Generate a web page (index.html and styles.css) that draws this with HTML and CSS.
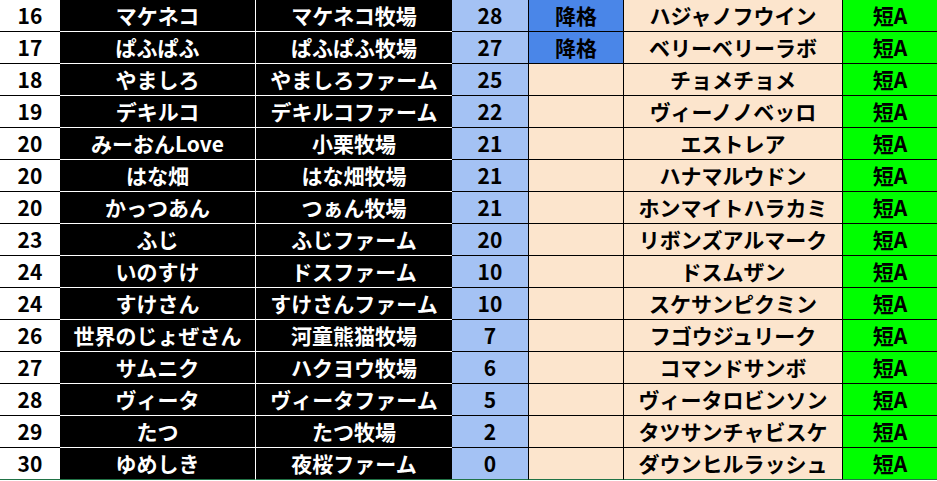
FILE: index.html
```html
<!DOCTYPE html>
<html lang="ja">
<head>
<meta charset="utf-8">
<link rel="stylesheet" href="styles.css">
</head>
<body>
<div class="sheet">
  <div class="row"><div class="c rank">16</div><div class="c name">マケネコ</div><div class="c farm">マケネコ牧場</div><div class="c pts">28</div><div class="c st down">降格</div><div class="c horse">ハジャノフウイン</div><div class="c grade">短A</div></div>
  <div class="row"><div class="c rank">17</div><div class="c name">ぱふぱふ</div><div class="c farm">ぱふぱふ牧場</div><div class="c pts">27</div><div class="c st down">降格</div><div class="c horse">ベリーベリーラボ</div><div class="c grade">短A</div></div>
  <div class="row"><div class="c rank">18</div><div class="c name">やましろ</div><div class="c farm">やましろファーム</div><div class="c pts">25</div><div class="c st"></div><div class="c horse">チョメチョメ</div><div class="c grade">短A</div></div>
  <div class="row"><div class="c rank">19</div><div class="c name">デキルコ</div><div class="c farm">デキルコファーム</div><div class="c pts">22</div><div class="c st"></div><div class="c horse">ヴィーノノベッロ</div><div class="c grade">短A</div></div>
  <div class="row"><div class="c rank">20</div><div class="c name">みーおんLove</div><div class="c farm">小栗牧場</div><div class="c pts">21</div><div class="c st"></div><div class="c horse">エストレア</div><div class="c grade">短A</div></div>
  <div class="row"><div class="c rank">20</div><div class="c name">はな畑</div><div class="c farm">はな畑牧場</div><div class="c pts">21</div><div class="c st"></div><div class="c horse">ハナマルウドン</div><div class="c grade">短A</div></div>
  <div class="row"><div class="c rank">20</div><div class="c name">かっつあん</div><div class="c farm">つぁん牧場</div><div class="c pts">21</div><div class="c st"></div><div class="c horse">ホンマイトハラカミ</div><div class="c grade">短A</div></div>
  <div class="row"><div class="c rank">23</div><div class="c name">ふじ</div><div class="c farm">ふじファーム</div><div class="c pts">20</div><div class="c st"></div><div class="c horse">リボンズアルマーク</div><div class="c grade">短A</div></div>
  <div class="row"><div class="c rank">24</div><div class="c name">いのすけ</div><div class="c farm">ドスファーム</div><div class="c pts">10</div><div class="c st"></div><div class="c horse">ドスムザン</div><div class="c grade">短A</div></div>
  <div class="row"><div class="c rank">24</div><div class="c name">すけさん</div><div class="c farm">すけさんファーム</div><div class="c pts">10</div><div class="c st"></div><div class="c horse">スケサンピクミン</div><div class="c grade">短A</div></div>
  <div class="row"><div class="c rank">26</div><div class="c name">世界のじょぜさん</div><div class="c farm">河童熊猫牧場</div><div class="c pts">7</div><div class="c st"></div><div class="c horse">フゴウジュリーク</div><div class="c grade">短A</div></div>
  <div class="row"><div class="c rank">27</div><div class="c name">サムニク</div><div class="c farm">ハクヨウ牧場</div><div class="c pts">6</div><div class="c st"></div><div class="c horse">コマンドサンボ</div><div class="c grade">短A</div></div>
  <div class="row"><div class="c rank">28</div><div class="c name">ヴィータ</div><div class="c farm">ヴィータファーム</div><div class="c pts">5</div><div class="c st"></div><div class="c horse">ヴィータロビンソン</div><div class="c grade">短A</div></div>
  <div class="row"><div class="c rank">29</div><div class="c name">たつ</div><div class="c farm">たつ牧場</div><div class="c pts">2</div><div class="c st"></div><div class="c horse">タツサンチャビスケ</div><div class="c grade">短A</div></div>
  <div class="row last"><div class="c rank">30</div><div class="c name">ゆめしき</div><div class="c farm">夜桜ファーム</div><div class="c pts">0</div><div class="c st"></div><div class="c horse">ダウンヒルラッシュ</div><div class="c grade">短A</div></div>
</div>
</body>
</html>
```

FILE: styles.css
```css
html, body {
  margin: 0;
  padding: 0;
  background: #ffffff;
}
.sheet {
  width: 937px;
  font-family: "Noto Sans CJK JP", "Noto Sans", sans-serif;
  font-weight: bold;
  font-size: 21px;
}
.row {
  display: flex;
  height: 32px;
}
.c {
  box-sizing: border-box;
  height: 32px;
  line-height: 31px;
  text-align: center;
  white-space: nowrap;
  overflow: hidden;
  border-bottom: 1px solid #000;
  color: #000;
}
.rank {
  width: 60px;
  background: #ffffff;
}
.name {
  width: 196px;
  background: #000;
  color: #fff;
  border-bottom-color: #fff;
  border-right: 1px solid #fff;
}
.farm {
  width: 196px;
  background: #000;
  color: #fff;
  border-bottom-color: #fff;
}
.pts {
  width: 77px;
  background: #a4c2f4;
  border-right: 1px solid #000;
}
.st {
  width: 95px;
  background: #fce5cd;
  border-right: 1px solid #000;
}
.st.down {
  background: #4a86e8;
}
.horse {
  width: 219px;
  background: #fce5cd;
  border-right: 1px solid #000;
}
.grade {
  width: 94px;
  background: #00ff00;
}
.last .c {
  border-bottom-color: #217346;
}
```
